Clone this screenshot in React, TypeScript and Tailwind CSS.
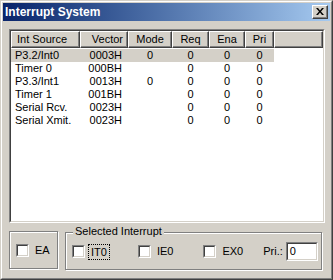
import React from "react";

type Row = { src: string; vec: string; mode: string; req: string; ena: string; pri: string };

const rows: Row[] = [
  { src: "P3.2/Int0", vec: "0003H", mode: "0", req: "0", ena: "0", pri: "0" },
  { src: "Timer 0", vec: "000BH", mode: "", req: "0", ena: "0", pri: "0" },
  { src: "P3.3/Int1", vec: "0013H", mode: "0", req: "0", ena: "0", pri: "0" },
  { src: "Timer 1", vec: "001BH", mode: "", req: "0", ena: "0", pri: "0" },
  { src: "Serial Rcv.", vec: "0023H", mode: "", req: "0", ena: "0", pri: "0" },
  { src: "Serial Xmit.", vec: "0023H", mode: "", req: "0", ena: "0", pri: "0" },
];

const headerCell =
  "h-[17px] border-t border-l border-t-white border-l-white border-r border-b border-r-[#404040] border-b-[#404040] shadow-[inset_-1px_-1px_0_#808080] leading-[15px] shrink-0";

const CheckBox = () => (
  <div className="w-[13px] h-[13px] border border-t-[#808080] border-l-[#808080] border-r-white border-b-white shrink-0">
    <div className="w-full h-full bg-white border border-t-[#404040] border-l-[#404040] border-r-[#d4d0c8] border-b-[#d4d0c8]" />
  </div>
);

const App = () => {
  return (
    <div
      className="w-[333px] h-[280px] bg-[#d4d0c8] border border-t-[#d4d0c8] border-l-[#d4d0c8] border-r-[#404040] border-b-[#404040] text-[11px] text-black"
      style={{ fontFamily: '"Liberation Sans", Arial, sans-serif' }}
    >
      <div className="w-full h-full border border-t-white border-l-white border-r-[#808080] border-b-[#808080] p-px flex flex-col">
        {/* title bar */}
        <div className="h-[18px] flex items-center justify-between bg-linear-to-r from-[#0a246a] to-[#a6caf0] pl-[2px] pr-[2px] shrink-0">
          <span className="text-white font-bold text-[12px] leading-[18px]">Interrupt System</span>
          <div className="w-[16px] h-[14px] bg-[#d4d0c8] border border-t-white border-l-white border-r-[#404040] border-b-[#404040] shadow-[inset_-1px_-1px_0_#808080] flex items-center justify-center">
            <svg width="8" height="7" viewBox="0 0 8 7" className="mr-px mb-px">
              <path d="M0 0h2l2 2.5L6 0h2L5 3.5 8 7H6L4 4.5 2 7H0l3-3.5z" fill="#000" />
            </svg>
          </div>
        </div>

        {/* list view */}
        <div className="ml-[6px] mt-[8px] w-[316px] h-[194px] border border-t-[#808080] border-l-[#808080] border-r-white border-b-white shrink-0">
          <div className="w-full h-full border border-t-[#404040] border-l-[#404040] border-r-[#d4d0c8] border-b-[#d4d0c8] bg-white flex flex-col">
            <div className="flex bg-[#d4d0c8]">
              <div className={`${headerCell} w-[69px] pl-[5px]`}>Int Source</div>
              <div className={`${headerCell} w-[48px] text-right pr-[4px]`}>Vector</div>
              <div className={`${headerCell} w-[44px] text-center`}>Mode</div>
              <div className={`${headerCell} w-[37px] text-center`}>Req</div>
              <div className={`${headerCell} w-[36px] text-center`}>Ena</div>
              <div className={`${headerCell} w-[29px] text-center`}>Pri</div>
              <div className={`${headerCell} flex-1`}></div>
            </div>
            <div className="flex flex-col pt-px">
              {rows.map((r, i) => (
                <div
                  key={r.src}
                  className={`flex w-[263px] h-[13px] leading-[13px] ${i === 0 ? "bg-[#d4d0c8]" : ""}`}
                >
                  <div className="w-[69px] pl-[4px] shrink-0">{r.src}</div>
                  <div className="w-[48px] text-right pr-[6px] shrink-0">{r.vec}</div>
                  <div className="w-[44px] text-center shrink-0">{r.mode}</div>
                  <div className="w-[37px] text-center shrink-0">{r.req}</div>
                  <div className="w-[36px] text-center shrink-0">{r.ena}</div>
                  <div className="w-[29px] text-center shrink-0">{r.pri}</div>
                </div>
              ))}
            </div>
          </div>
        </div>

        {/* bottom groups */}
        <div className="flex ml-[6px] mt-[7px] gap-[7px]">
          <div className="w-[49px] h-[38px] border border-[#808080] shadow-[inset_1px_1px_0_white,1px_1px_0_white] flex items-center pl-[6px] pt-[1px] gap-[6px] mt-px">
            <CheckBox />
            <span>EA</span>
          </div>
          <div className="relative w-[257px] h-[38px] mt-[2px] border border-[#808080] shadow-[inset_1px_1px_0_white,1px_1px_0_white] flex items-center pl-[6px] pt-[1px]">
            <span className="absolute left-[7px] -top-[8px] bg-[#d4d0c8] px-[2px] leading-[13px]">Selected Interrupt</span>
            <CheckBox />
            <span className="ml-[3px] px-[2px] border border-dotted border-black leading-[14px]">IT0</span>
            <div className="ml-[28px]"><CheckBox /></div>
            <span className="ml-[6px]">IE0</span>
            <div className="ml-[30px]"><CheckBox /></div>
            <span className="ml-[6px]">EX0</span>
            <span className="ml-[20px]">Pri.:</span>
            <div className="ml-[3px] w-[32px] h-[19px] border border-t-[#808080] border-l-[#808080] border-r-white border-b-white">
              <div className="w-full h-full bg-white border border-t-[#404040] border-l-[#404040] border-r-[#d4d0c8] border-b-[#d4d0c8] pl-[2px] leading-[15px]">
                0
              </div>
            </div>
          </div>
        </div>
      </div>
    </div>
  );
};

export default App;
